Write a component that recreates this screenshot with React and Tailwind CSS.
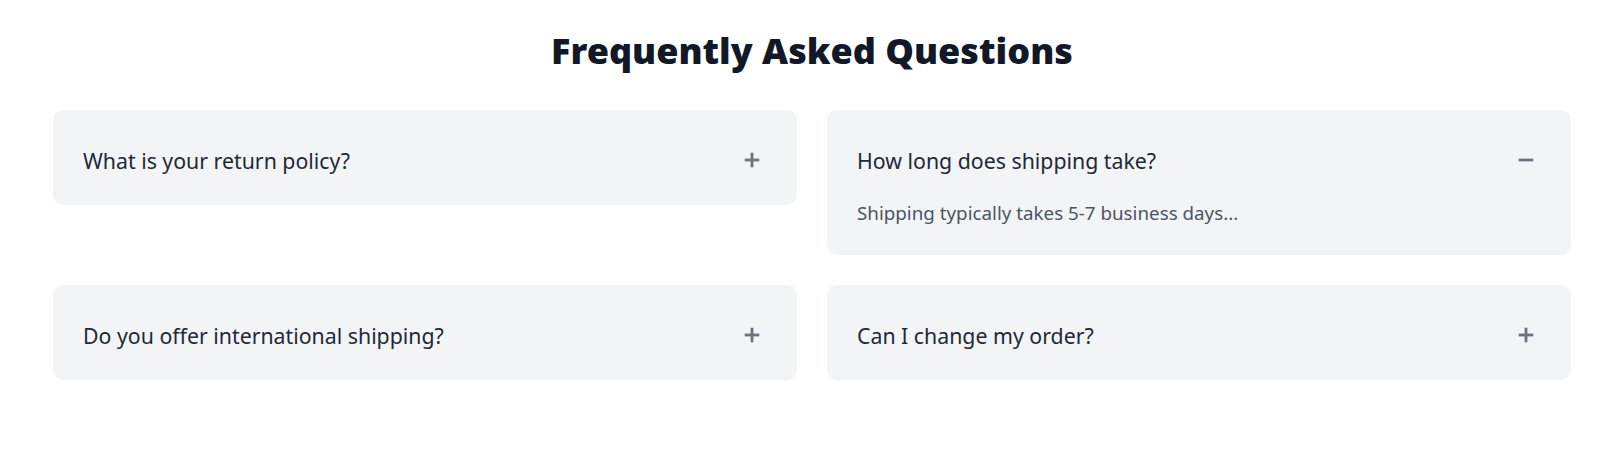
import { useState } from "react";

const faqs = [
  { q: "What is your return policy?", a: "We accept returns within 30 days of purchase..." },
  { q: "How long does shipping take?", a: "Shipping typically takes 5-7 business days..." },
  { q: "Do you offer international shipping?", a: "Yes, we ship to most countries worldwide..." },
  { q: "Can I change my order?", a: "Orders can be changed within 24 hours..." },
];

function ToggleIcon({ open }) {
  return (
    <svg width="16" height="16" viewBox="0 0 16 16" className="mr-[7px] mb-[1px] shrink-0 text-[#6b7280]">
      <line x1="0.7" y1="8" x2="15.3" y2="8" stroke="currentColor" strokeWidth="2.8" />
      {!open && <line x1="8" y1="0.7" x2="8" y2="15.3" stroke="currentColor" strokeWidth="2.8" />}
    </svg>
  );
}

export default function App() {
  const [openIndex, setOpenIndex] = useState(1);

  return (
    <div className="min-h-[454px] bg-white pt-[28px]" style={{ fontFamily: '"Segoe UI", "Noto Sans", sans-serif' }}>
      <h1 className="mb-[37px] text-center text-[36px] leading-[45px] font-black text-[#111827]">
        Frequently Asked Questions
      </h1>

      <div className="grid grid-cols-2 items-start gap-[30px] px-[53px]">
        {faqs.map((item, i) => {
          const open = openIndex === i;
          return (
            <div key={i} className="rounded-[10px] bg-[#f3f4f6] px-[30px] pt-[33px] pb-[27px]">
              <button
                type="button"
                onClick={() => setOpenIndex(open ? null : i)}
                className="flex w-full items-center justify-between text-left"
              >
                <span className="text-[21.3px] leading-[35px] text-[#1f2937]">{item.q}</span>
                <ToggleIcon open={open} />
              </button>
              {open && (
                <p className="mt-[20px] text-[18.8px] leading-[30px] text-[#4b5563]">{item.a}</p>
              )}
            </div>
          );
        })}
      </div>
    </div>
  );
}
